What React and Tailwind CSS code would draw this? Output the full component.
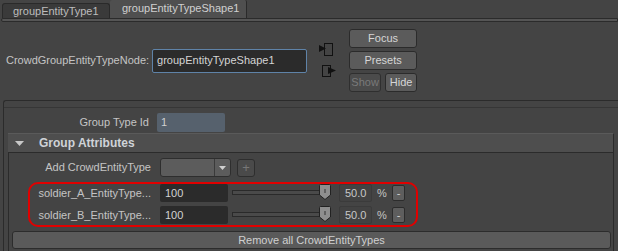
import React from "react";

function Thumb() {
  return (
    <svg width="99" height="18" viewBox="0 0 99 18" className="block">
      <rect x="0.5" y="6.5" width="90" height="4" fill="#4a4a4a" stroke="#2a2a2a" />
      <path d="M87.5 1.5 Q87.5 0.5 88.5 0.5 L97.5 0.5 Q98.5 0.5 98.5 1.5 L98.5 11 L93 15.5 L87.5 11 Z" fill="#8e8e8e" stroke="#222" />
      <line x1="93" y1="5" x2="93" y2="9" stroke="#333" strokeWidth="1" />
    </svg>
  );
}

function EntityRow({ label }) {
  return (
    <div className="flex items-center h-[18px]">
      <div className="w-[121px] text-right whitespace-nowrap">{label}</div>
      <div className="ml-[9px] w-[68px] h-[18px] bg-[#2b2b2b] rounded-[2px] flex items-center pl-[5px] text-[#d2d2d2]">100</div>
      <div className="ml-[4px]">
        <Thumb />
      </div>
      <div className="ml-[8px] w-[33px] h-[18px] border border-[#3b3b3b] bg-[#424242] rounded-[2px] flex items-center pl-[5px] text-[#c8c8c8]">50.0</div>
      <div className="ml-[5px] w-[10px]">%</div>
      <div className="ml-[5px] w-[13px] h-[16px] bg-[#5e5e5e] border border-[#2c2c2c] rounded-[2px] flex items-center justify-center text-[#d0d0d0] leading-none">-</div>
    </div>
  );
}

export default function App() {
  return (
    <div className="w-[618px] h-[251px] bg-[#444444] overflow-hidden flex flex-col text-[11px] leading-none text-[#c4c4c4] font-['Liberation_Sans',Arial,sans-serif]">
      {/* tabs */}
      <div className="h-[18px] flex items-end shrink-0">
        <div className="ml-[2px] w-[108px] h-[15px] bg-[#3a3a3a] border border-b-0 border-[#2a2a2a] rounded-t-[3px] flex items-center pl-[10px] text-[#bdbdbd]">
          groupEntityType1
        </div>
        <div className="w-[137px] h-[18px] bg-[#4f4f4f] rounded-t-[2px] border-r border-[#2a2a2a] flex items-center pl-[12px] pb-[2px] text-[#d0d0d0]">
          groupEntityTypeShape1
        </div>
        <div className="flex-1" />
      </div>
      <div className="h-[4px] ml-[1px] border border-[#2b2b2b] bg-[#555555] rounded-l-[3px] shrink-0" />

      {/* header */}
      <div className="h-[78px] flex shrink-0">
        <div className="flex items-center h-[63px] mt-[7px] pl-[6px]">
          <span className="whitespace-nowrap">CrowdGroupEntityTypeNode:</span>
          <div className="ml-[3px] w-[155px] h-[24px] border border-[#5f83a8] bg-[#2b2b2b] rounded-[2px] pl-[4px] flex items-center text-[#d4d4d4]">
            groupEntityTypeShape1
          </div>
        </div>
        <svg width="18" height="36" viewBox="0 0 18 36" className="ml-[12px] mt-[21px] block">
          <rect x="5.5" y="0.5" width="8" height="12" fill="none" stroke="#111" />
          <polygon points="0,2 0,9 7,5.5" fill="#111" />
          <rect x="3.5" y="22.5" width="8" height="11" fill="none" stroke="#111" />
          <polygon points="9,24 9,31 17,27.5" fill="#111" />
        </svg>
        <div className="ml-[12px] mt-[7px] w-[68px] flex flex-col gap-[3px]">
          <div className="h-[19px] bg-[#5b5b5b] border border-[#2b2b2b] rounded-[3px] flex items-center justify-center text-[#d6d6d6]">Focus</div>
          <div className="h-[19px] bg-[#5b5b5b] border border-[#2b2b2b] rounded-[3px] flex items-center justify-center text-[#d6d6d6]">Presets</div>
          <div className="flex gap-[4px]">
            <div className="w-[32px] h-[19px] bg-[#4b4b4b] border border-[#2f2f2f] rounded-[3px] flex items-center justify-center text-[#7a7a7a]">Show</div>
            <div className="w-[32px] h-[19px] bg-[#5b5b5b] border border-[#2b2b2b] rounded-[3px] flex items-center justify-center text-[#d6d6d6]">Hide</div>
          </div>
        </div>
      </div>

      {/* frame */}
      <div className="flex-1 ml-[3px] border-l border-t border-[#2b2b2b] rounded-tl-[3px] flex flex-col">
        <div className="h-[6px] shrink-0" />
        <div className="flex-1 border-t border-[#363636] flex flex-col">
          <div className="mt-[5px] flex items-center h-[19px] shrink-0">
            <div className="w-[145px] text-right whitespace-nowrap">Group Type Id</div>
            <div className="ml-[8px] w-[68px] h-[19px] bg-[#56616d] rounded-[2px] flex items-center pl-[4px] text-[#d0d0d0]">1</div>
          </div>
          <div className="mt-[1px] ml-[4px] mr-[4px] h-[20px] bg-[#4e4e4e] border-t border-[#5a5a5a] border-b border-r border-b-[#2b2b2b] border-r-[#2b2b2b] flex items-center shrink-0">
            <svg width="9" height="5" viewBox="0 0 9 5" className="ml-[7px] block">
              <polygon points="0,0 9,0 4.5,5" fill="#c8c8c8" />
            </svg>
            <span className="ml-[15px] font-bold text-[12px] text-[#cfd3d8]">Group Attributes</span>
          </div>
          <div className="flex-1 ml-[4px] mr-[4px] border-l border-r border-[#2b2b2b] flex flex-col">
            <div className="mt-[5px] flex items-center h-[19px] shrink-0">
              <div className="w-[142px] text-right whitespace-nowrap">Add CrowdEntityType</div>
              <div className="ml-[9px] w-[71px] h-[19px] bg-[#5c5c5c] border border-[#2e2e2e] rounded-[3px] flex">
                <div className="flex-1" />
                <div className="w-[16px] border-l border-[#3a3a3a] flex items-center justify-center">
                  <svg width="7" height="4" viewBox="0 0 7 4" className="block">
                    <polygon points="0,0 7,0 3.5,4" fill="#d0d0d0" />
                  </svg>
                </div>
              </div>
              <div className="ml-[6px] w-[18px] h-[18px] bg-[#4a4a4a] border border-[#2e2e2e] rounded-[3px] flex items-center justify-center text-[#777] text-[13px]">+</div>
            </div>
            <div className="mt-[5px] ml-[19px] w-[390px] h-[45px] border-2 border-[#e00000] rounded-[10px] flex flex-col gap-[4px] shrink-0">
              <EntityRow label="soldier_A_EntityType..." />
              <EntityRow label="soldier_B_EntityType..." />
            </div>
            <div className="mt-[4px] ml-[3px] w-[599px] h-[18px] bg-[#5a5a5a] border border-[#2c2c2c] rounded-[3px] flex items-center justify-center text-[#d0d0d0] shrink-0">
              Remove all CrowdEntityTypes
            </div>
          </div>
        </div>
      </div>
    </div>
  );
}
